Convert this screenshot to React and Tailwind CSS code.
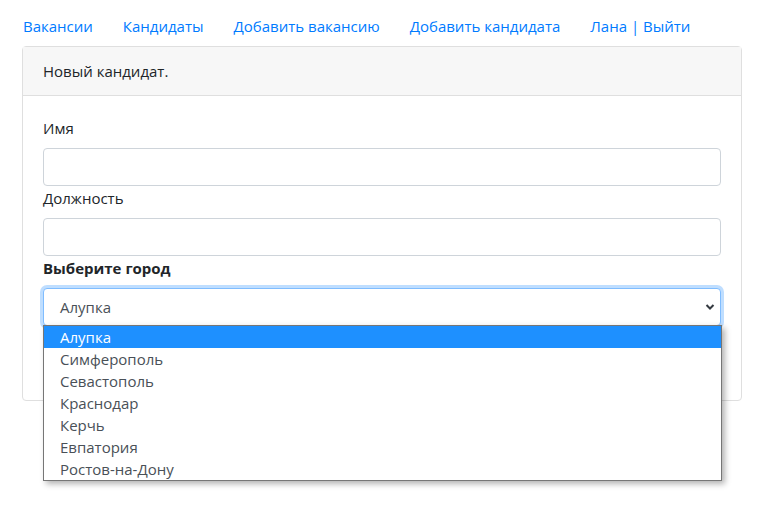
const links = ["Вакансии", "Кандидаты", "Добавить вакансию", "Добавить кандидата", "Лана | Выйти"]
const cities = ["Алупка", "Симферополь", "Севастополь", "Краснодар", "Керчь", "Евпатория", "Ростов-на-Дону"]

const font = "font-['Open_Sans','Noto_Sans',sans-serif]"

function ChevronDown() {
  return (
    <svg className="h-[10px] w-[10px]" viewBox="0 0 10 10" fill="none" stroke="#343a40" strokeWidth="2">
      <path d="M1.5 3l3.5 3.5L8.5 3" />
    </svg>
  )
}

function Field({ label, bold }) {
  return (
    <div>
      <label className={`mb-2 block leading-6 ${bold ? "font-bold" : ""}`}>{label}</label>
      <input className="block h-[38px] w-full rounded border border-[#ced4da] bg-white px-3" />
    </div>
  )
}

export default function App() {
  return (
    <div className={`min-h-screen bg-white pt-[6px] text-[15px] text-[#212529] ${font}`}>
      {/* Top nav */}
      <nav className="ml-[8px] flex">
        {links.map((l) => (
          <a key={l} href="#" className="px-[15px] py-2 leading-6 text-[#007bff]">
            {l}
          </a>
        ))}
      </nav>

      {/* Card */}
      <div className="ml-[22px] w-[720px] rounded border border-[#dfdfdf]">
        <div className="border-b border-[#dfdfdf] bg-[#f7f7f7] px-5 py-3 leading-6">Новый кандидат.</div>
        <div className="p-5">
          <Field label="Имя" />
          <Field label="Должность" />
          <label className="mb-2 block font-bold leading-6">Выберите город</label>
          <div className="relative">
            <div className="flex h-[38px] items-center justify-between rounded border border-[#80bdff] bg-white pl-4 pr-[5px] text-[#495057] shadow-[0_0_0_3px_rgba(0,123,255,0.25)]">
              <span>Алупка</span>
              <ChevronDown />
            </div>
            <div className="mt-4 h-[38px] w-32 rounded bg-[#007bff]" />

            {/* Open dropdown list */}
            <ul className="absolute left-0 top-[37px] z-10 w-[679px] border border-[#767676] bg-white shadow-[3px_3px_6px_rgba(0,0,0,0.3)]">
              {cities.map((c, i) => (
                <li
                  key={c}
                  className={`h-[22px] pl-4 leading-[22px] ${i === 0 ? "bg-[#1e90ff] text-white" : "text-[#495057]"}`}
                >
                  {c}
                </li>
              ))}
            </ul>
          </div>
        </div>
      </div>
    </div>
  )
}
